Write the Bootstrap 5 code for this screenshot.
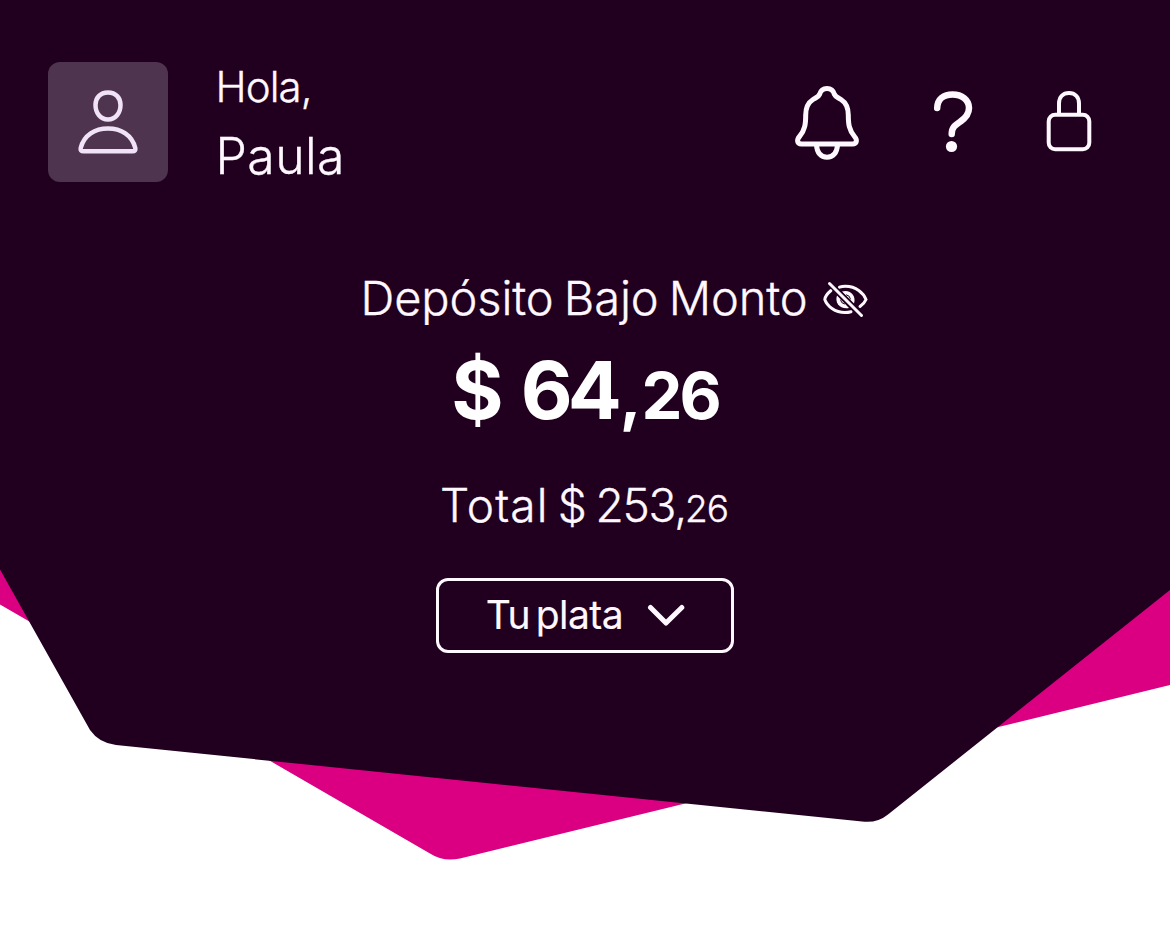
<!DOCTYPE html>
<html lang="es">
<head>
<meta charset="utf-8">
<meta name="viewport" content="width=device-width, initial-scale=1">
<title>Tu plata</title>
<link href="https://cdn.jsdelivr.net/npm/bootstrap@5.3.0/dist/css/bootstrap.min.css" rel="stylesheet">
<style>
body{font-family:Inter,"Liberation Sans",sans-serif;color:#fff9ff;background:#fff;font-weight:300;-webkit-text-stroke:.35px currentColor}
.hero{height:929px}
.hero-shape{z-index:0}
.hero-body{z-index:1;padding-top:62px}
.topbar{height:120px;padding-left:48px;padding-right:75px}
.avatar{width:120px;height:120px;border-radius:12px;background:#4e344e;margin-right:47.500px}
.hello{font-size:42px;line-height:48px;letter-spacing:-.9px;margin:1px 0 13px}
.user-name{font-size:50px;line-height:64px;letter-spacing:.4px}
.account{margin-top:86px;font-size:47px;line-height:60px;letter-spacing:-.1px;word-spacing:-3px;padding-left:59px}
.account svg{margin-left:15px;margin-top:2px}
.amount{margin-top:12px;font-size:80px;line-height:100px;font-weight:700;color:#fff;letter-spacing:-5px;word-spacing:8px;-webkit-text-stroke:0}
.amount .cents{font-size:65px;line-height:1;letter-spacing:-3px}
.amount .comma{margin-left:3px;margin-right:3px}
.total{margin-top:35px;font-size:46px;line-height:60px;letter-spacing:-1.2px;word-spacing:-2px;padding-right:2px}
.total .word{letter-spacing:1.1px;margin-right:-.5px}
.total .cents{font-size:37px;line-height:1;letter-spacing:-1px;margin-left:-1px}
.btn-plata{margin-top:43px;width:298px;height:75px;border:3px solid #fff9ff;border-radius:12px;color:#fff9ff;font-size:39px;line-height:60px;font-weight:400;letter-spacing:-.5px;word-spacing:-5px;padding:0 0 1px 1px;-webkit-text-stroke:.15px currentColor}
</style>
</head>
<body>
<main class="hero position-relative overflow-hidden">
  <svg class="hero-shape position-absolute top-0 start-0" width="1170" height="929" viewBox="0 0 1170 929" aria-hidden="true">
    <path fill="#db0082" d="M0 500V604.500L430 853.500Q443 862 460 858.500L1170 685V500Z"/>
    <path fill="#21001f" d="M0 0H1170V590L888 814.500Q877 823.500 862 821.500L116 745Q99 743 90 730L0 569.500Z"/>
  </svg>
  <div class="hero-body position-relative">
    <header class="topbar d-flex align-items-center">
      <div class="avatar d-flex flex-shrink-0">
        <svg width="120" height="120" viewBox="0 0 120 120" fill="none" stroke="#f0e2f7" stroke-width="4.500" stroke-linejoin="round">
          <path d="M60 30.500C68 30.500 72.500 36 72.500 43C72.500 51 67.500 57.500 60 57.500S47.500 51 47.500 43C47.500 36 52 30.500 60 30.500Z"/>
          <path d="M35.500 89.200H84.500Q88 89.200 87.300 86C84 73 73 66.500 60 66.500S36 73 32.700 86Q32 89.200 35.500 89.200Z"/>
        </svg>
      </div>
      <div class="align-self-start me-auto">
        <div class="hello"><span>Hola,</span></div>
        <div class="user-name"><span>Paula</span></div>
      </div>
      <svg width="305" height="90" viewBox="790 77 305 90" fill="none" stroke="#fff9ff" stroke-linecap="round" stroke-linejoin="round">
        <path stroke-width="5" d="M827 88.500C831 88.500 833.500 91 834.500 94.500C835.500 97 838 97.500 841 99.500C846.500 103 848.300 108 848.300 115C848.300 124 849 130 854.500 136.500C857.500 140 857 144 852.500 144H801.500C797 144 796.500 140 799.500 136.500C805 130 805.700 124 805.700 115C805.700 108 807.500 103 813 99.500C816 97.500 818.500 97 819.500 94.500C820.500 91 823 88.500 827 88.500Z"/>
        <path stroke-width="5" d="M816.500 145C817 153 821 157.200 827 157.200S837 153 837.500 145"/>
        <path stroke-width="6.500" d="M937.200 108C937.500 99 944 94.500 952.500 94.500C962 94.500 969 100 969 108C969 114 965.500 118 960.500 121.500C955 125.300 951.700 127.500 951.700 134"/>
        <circle cx="951.500" cy="146.500" r="5.600" fill="#fff9ff" stroke="none"/>
        <rect x="1048.700" y="114.700" width="40.600" height="34.600" rx="6.500" stroke-width="4"/>
        <path stroke-width="4" d="M1059 114V103.500C1059 97 1063 93 1069 93S1079 97 1079 103.500V114"/>
      </svg>
    </header>

    <section class="d-flex flex-column align-items-center">
      <div class="account d-flex align-items-center">
        <span>Depósito Bajo Monto</span>
        <svg width="46" height="38" viewBox="823 280 46 38" fill="none" stroke="#fff9ff" stroke-width="3" stroke-linecap="round">
          <path d="M831 290.500C828 293 825 297 824.800 299.500C827 306 835 312.500 845 312.500Q848 312.500 851 311.700"/>
          <path d="M839.500 287.200Q842 286.300 845.500 286.300C856 286.300 863.500 293 866 299.500C865 302 863 304.500 860 306.500"/>
          <path d="M837 295.500C834.500 303 840 309.500 849 308L837 295.500Z" fill="#fff9ff" stroke="none"/>
          <path d="M842 291.500C850 289 856.500 295.500 854 303.500Z" fill="#fff9ff" stroke="none"/>
          <path d="M840.500 300Q841 303.500 844.500 304M846.500 294.800Q850 295.500 850.500 299" stroke="#21001f" stroke-width="1"/>
          <path d="M829.500 283.500L861.500 315.500" stroke="#21001f" stroke-width="5.500" stroke-linecap="butt"/>
          <path d="M829.500 283.500L861.500 315.500"/>
        </svg>
      </div>
      <div class="amount"><span>$ 64</span><span class="cents comma">,</span><span class="cents">26</span></div>
      <div class="total"><span class="word">Total</span> <span>$ 253,</span><span class="cents">26</span></div>
      <button type="button" class="btn btn-plata d-flex align-items-center justify-content-center">
        <span>Tu plata</span>
        <svg class="ms-4" width="38" height="24" viewBox="647 603 38 24" fill="none" stroke="#fff9ff" stroke-width="5" stroke-linecap="round" stroke-linejoin="round"><path d="M650.500 607.500L666 623L681.800 607.500"/></svg>
      </button>
    </section>
  </div>
</main>
<script src="https://cdn.jsdelivr.net/npm/bootstrap@5.3.0/dist/js/bootstrap.bundle.min.js"></script>
</body>
</html>
